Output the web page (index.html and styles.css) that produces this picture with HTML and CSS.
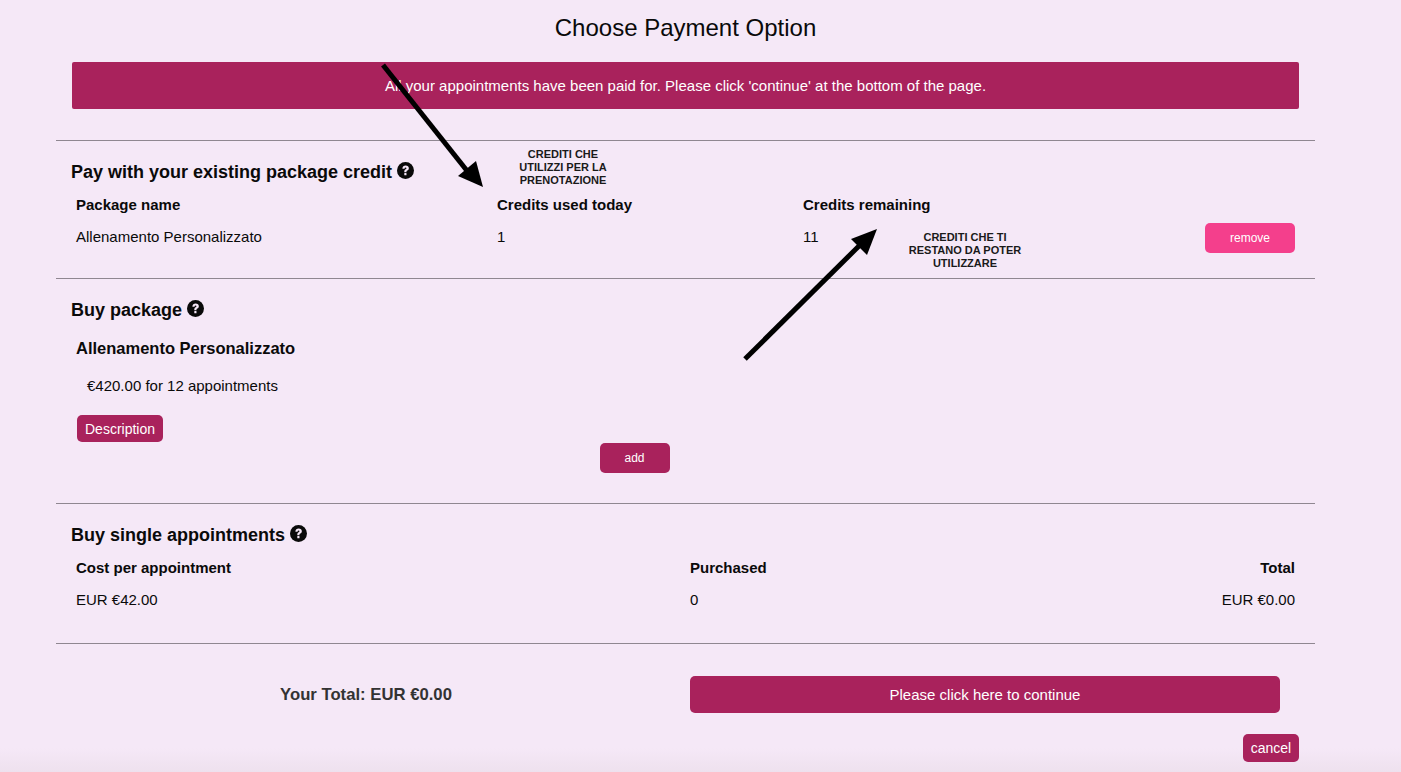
FILE: index.html
```html
<!DOCTYPE html>
<html lang="en">
<head>
<meta charset="utf-8"/>
<meta content="width=device-width, initial-scale=1.0" name="viewport"/>
<title>Choose Payment Option</title>
<link rel="stylesheet" href="styles.css">
</head>
<body>
<div class="page">
<h1>Choose Payment Option</h1>
<div class="notice">All your appointments have been paid for. Please click 'continue' at the bottom of the page.</div>

<div class="section credit-section">
<h3>Pay with your existing package credit
<svg class="help" viewBox="0 0 24 24"><circle cx="12" cy="12" r="12" fill="#0a0a0a"/><path d="M7.600 9.400c.1-2.800 2-4.400 4.600-4.400 2.700 0 4.500 1.500 4.500 3.700 0 1.600-.9 2.500-2.100 3.300-1 .7-1.200 1-1.200 1.900v.5h-3.100v-.8c0-1.600.6-2.400 1.800-3.200.9-.6 1.300-1 1.300-1.500 0-.7-.5-1.100-1.300-1.100-.9 0-1.400.6-1.500 1.700z" fill="#f6e8f8"/><rect x="10.300" y="15.500" width="3.100" height="3.100" rx=".4" fill="#f6e8f8"/></svg>
</h3>
<div class="credit-row head">
<div>Package name</div>
<div>Credits used today</div>
<div>Credits remaining</div>
</div>
<div class="credit-row body-row">
<div>Allenamento Personalizzato</div>
<div>1</div>
<div>11</div>
<button class="btn btn-remove">remove</button>
</div>
</div>

<div class="section package-section">
<h3>Buy package
<svg class="help" viewBox="0 0 24 24"><circle cx="12" cy="12" r="12" fill="#0a0a0a"/><path d="M7.600 9.400c.1-2.800 2-4.400 4.600-4.400 2.700 0 4.500 1.500 4.500 3.700 0 1.600-.9 2.500-2.100 3.300-1 .7-1.200 1-1.200 1.900v.5h-3.100v-.8c0-1.600.6-2.400 1.800-3.200.9-.6 1.300-1 1.300-1.500 0-.7-.5-1.100-1.300-1.100-.9 0-1.400.6-1.500 1.700z" fill="#f6e8f8"/><rect x="10.300" y="15.500" width="3.100" height="3.100" rx=".4" fill="#f6e8f8"/></svg>
</h3>
<h4>Allenamento Personalizzato</h4>
<p class="price">€420.00 for 12 appointments</p>
<button class="btn btn-description">Description</button>
<div class="add-row"><button class="btn btn-add">add</button></div>
</div>

<div class="section single-section">
<h3>Buy single appointments
<svg class="help" viewBox="0 0 24 24"><circle cx="12" cy="12" r="12" fill="#0a0a0a"/><path d="M7.600 9.400c.1-2.800 2-4.400 4.600-4.400 2.700 0 4.500 1.500 4.500 3.700 0 1.600-.9 2.500-2.100 3.300-1 .7-1.200 1-1.200 1.900v.5h-3.100v-.8c0-1.600.6-2.400 1.800-3.200.9-.6 1.300-1 1.300-1.500 0-.7-.5-1.100-1.300-1.100-.9 0-1.400.6-1.500 1.700z" fill="#f6e8f8"/><rect x="10.300" y="15.500" width="3.100" height="3.100" rx=".4" fill="#f6e8f8"/></svg>
</h3>
<div class="single-row head">
<div>Cost per appointment</div>
<div>Purchased</div>
<div class="right">Total</div>
</div>
<div class="single-row body-row">
<div>EUR €42.00</div>
<div>0</div>
<div class="right">EUR €0.00</div>
</div>
</div>

<div class="section total-section">
<div class="total">Your Total: EUR €0.00</div>
<button class="btn btn-continue">Please click here to continue</button>
</div>
<div class="cancel-row"><button class="btn btn-cancel">cancel</button></div>
</div>

<!-- annotations drawn on top of the screenshot -->
<div class="note note-used">CREDITI CHE<br/>UTILIZZI PER LA<br/>PRENOTAZIONE</div>
<div class="note note-left">CREDITI CHE TI<br/>RESTANO DA POTER<br/>UTILIZZARE</div>
<svg class="arrows" viewBox="0 0 1401 772">
<path d="M383 65L468 172" stroke="#000" stroke-width="5" fill="none"/>
<path d="M483 187L458 176L476 161z" fill="#000"/>
<path d="M745 359L862 243" stroke="#000" stroke-width="5" fill="none"/>
<path d="M877 229L851 239L867 255z" fill="#000"/>
</svg>
</body>
</html>
```

FILE: styles.css
```css
html, body {
    height: 100%;
}

body {
    font-family: "Liberation Sans", Arial, sans-serif;
    margin: 0;
    background: linear-gradient(to top, #eee1ee 0, #f5e8f7 24px);
    color: #0a0a0a;
    overflow: hidden;
}

.page {
    width: 1259px;
    margin-left: 56px;
}

h1 {
    font-size: 24px;
    font-weight: normal;
    text-align: center;
    margin: 0;
    padding-top: 14px;
    line-height: 28px;
}

.notice {
    margin: 20px 16px 0 16px;
    height: 47px;
    line-height: 48px;
    background: #a9225c;
    color: #fff;
    font-size: 15px;
    text-align: center;
    border-radius: 2px;
}

.section {
    border-top: 1px solid #8f8791;
    padding: 0 20px;
}

h3 {
    font-size: 18px;
    font-weight: bold;
    margin: 0 0 0 -5px;
    line-height: 20px;
}

.help {
    width: 17px;
    height: 17px;
    vertical-align: -1px;
}

.credit-section {
    margin-top: 31px;
    height: 138px;
    padding-top: 21px;
    box-sizing: border-box;
}

.credit-row {
    display: grid;
    grid-template-columns: 421px 306px 1fr auto;
    font-size: 15px;
}

.head {
    font-weight: bold;
    font-size: 15px;
}

.credit-section .head {
    margin-top: 13px;
    line-height: 20px;
}

.credit-section .body-row {
    margin-top: 8px;
    height: 30px;
    line-height: 28px;
}

.btn {
    border: none;
    background: #a9225c;
    color: #fff;
    font-family: "Liberation Sans", Arial, sans-serif;
    border-radius: 5px;
    padding: 0;
    display: block;
}

.btn-remove {
    width: 90px;
    height: 30px;
    background: #f43f8c;
    font-size: 12px;
}

.package-section {
    height: 225px;
    padding-top: 21px;
    box-sizing: border-box;
}

h4 {
    font-size: 16.500px;
    font-weight: bold;
    margin: 18px 0 0 0;
    line-height: 20px;
}

.price {
    font-size: 15px;
    line-height: 18px;
    margin: 19px 0 0 11px;
}

.btn-description {
    width: 86px;
    height: 27px;
    margin: 20px 0 0 1px;
    font-size: 14px;
}

.add-row {
    display: flex;
    justify-content: center;
    padding-right: 102px;
    margin-top: 1px;
    box-sizing: border-box;
}

.btn-add {
    width: 70px;
    height: 30px;
    font-size: 12px;
}

.single-section {
    height: 140px;
    padding-top: 21px;
    box-sizing: border-box;
}

.single-row {
    display: grid;
    grid-template-columns: 614px 1fr auto;
    font-size: 15px;
}

.single-section .head {
    margin-top: 13px;
    line-height: 20px;
}

.single-section .body-row {
    margin-top: 12px;
    line-height: 20px;
}

.right {
    text-align: right;
}

.total-section {
    display: flex;
    align-items: center;
    height: 91px;
    padding: 11px 35px 0 0;
    box-sizing: border-box;
}

.total {
    width: 620px;
    margin-right: 14px;
    text-align: center;
    font-size: 16.700px;
    font-weight: bold;
    color: #333;
}

.btn-continue {
    width: 590px;
    height: 37px;
    font-size: 15px;
}

.cancel-row {
    display: flex;
    justify-content: flex-end;
    padding-right: 16px;
}

.btn-cancel {
    width: 56px;
    height: 28px;
    font-size: 14px;
}

.note {
    position: absolute;
    font-size: 11px;
    font-weight: bold;
    line-height: 13px;
    text-align: center;
    width: 140px;
    color: #1a1a1a;
}

.note-used {
    left: 493px;
    top: 148px;
}

.note-left {
    left: 895px;
    top: 231px;
}

.arrows {
    position: absolute;
    left: 0;
    top: 0;
    width: 1401px;
    height: 772px;
    pointer-events: none;
}
```
